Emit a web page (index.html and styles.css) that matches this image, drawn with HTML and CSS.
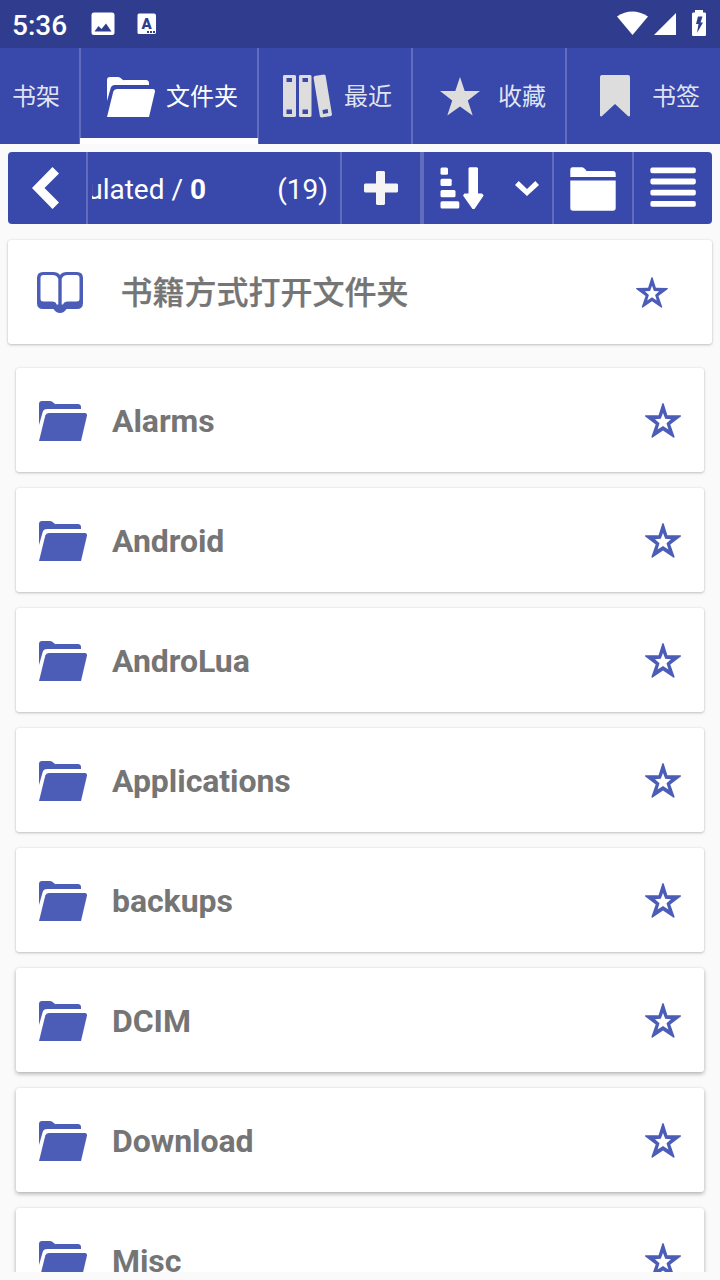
FILE: index.html
```
<!DOCTYPE html>
<html lang="zh">
<head>
<meta charset="utf-8">
<title>文件夹</title>
<link rel="stylesheet" href="styles.css">
</head>
<body>

<svg class="defs">
	<symbol id="folder-open" viewBox="0 0 48 40">
		<path d="M0 24V3Q0 0 3 0H11Q13 0 14.5 1.8T17.5 3H39Q42 3.3 42 6V8H8Q4.5 8 3.7 11Z"/>
		<path d="M10 12H46Q48.3 12.3 48 14.5L42 40H0L6.3 14.5Q7 12 10 12Z"/>
	</symbol>
	<symbol id="star-outline" viewBox="0 0 36 35">
		<path fill-rule="evenodd" d="M17.3 .5Q18 -.5 18.700 .5L22.400 12.200L35.500 12.300Q36.500 12.800 35.500 13.800L25.300 21.500L29.600 33.800Q29.500 35 28.300 34.500L18 27.500L7.700 34.500Q6.500 35 6.400 33.800L10.700 21.500L.5 13.800Q-.5 12.800 .5 12.300L13.600 12.200ZM18 10L15.800 15.800L10 16.200L14.500 20.200L12.600 26.500L18 23L23.400 26.500L21.500 20.200L26 16.200L20.200 15.800Z"/>
	</symbol>
</svg>

<header class="status">
	<span class="time">5:36</span>
	<svg class="picture" width="24" height="24"><path fill-rule="evenodd" d="M3 .5H21Q23.5 .5 23.5 3V20.500Q23.5 23 21 23H3Q.5 23 .5 20.500V3Q.5 .5 3 .5ZM3.5 19.500H20.5L15 11.500L10.5 17L7.500 14Z"/></svg>
	<svg class="keyboard" width="20" height="22"><path d="M2 .5H17Q19 .5 19 2.500V19.500Q19 21 17 21H2Q.5 21 .5 19.500V2.500Q.5 .5 2 .5Z"/><text x="9.700" y="15.800">A</text><path class="dots" d="M10 19H18"/></svg>
	<svg class="radio" width="96" height="28">
		<path d="M1 6.500Q16 -3.500 32 6.500L16.500 25Z"/>
		<path d="M38 25L60 3V25Z"/>
		<path fill-rule="evenodd" d="M79 0H87V2.500H89Q90 2.500 90 4V24.500Q90 26 89 26H77Q76 26 76 24.500V4Q76 2.500 77 2.500H79ZM82 6.500L80 14H82.500L81 23L87 12.500H84.500L86.500 6.500Z"/>
	</svg>
</header>

<nav class="tabs">
	<a class="tab"><span>书架</span></a>
	<a class="tab active">
		<svg width="56" height="56"><use href="#folder-open" x="7" y="9" width="48" height="40"/></svg>
		<span>文件夹</span>
	</a>
	<a class="tab">
		<svg width="56" height="56">
			<path fill-rule="evenodd" d="M6 7H17L18 8V48L17 49H6L5 48V8ZM8.500 10V14H14V10ZM8.500 41.500V46H14V41.500Z"/>
			<path fill-rule="evenodd" d="M22 7H32.500L33.500 8V48L32.500 49H22L21 48V8ZM24.500 10V14H30V10ZM24.500 41.500V46H30V41.500Z"/>
			<path fill-rule="evenodd" d="M36.500 8L46 6.500L47.500 7.300L54 46.500L53.200 48L43.500 49.500L42 48.700L35.500 9.500ZM44.500 42L45 46L50.200 45L49.700 41Z"/>
		</svg>
		<span>最近</span>
	</a>
	<a class="tab">
		<svg width="56" height="56"><path d="M28 9L32.700 23H48L35.800 32.500L40.700 47.500L28 38.500L15.300 47.500L20.200 32.500L8 23H23.300Z"/></svg>
		<span>收藏</span>
	</a>
	<a class="tab">
		<svg width="56" height="56"><path d="M16 7H42Q44 7 44 9V48L42.500 48.500L29 36L15.500 48.500L14 48V9Q14 7 16 7Z"/></svg>
		<span>书签</span>
	</a>
</nav>

<div class="toolbar">
	<a class="tool back"><svg width="28" height="42"><path d="M20.500 0L27 6.500L12.500 21L27 35.500L20.500 42L0 21Z"/></svg></a>
	<div class="path">
		<div class="crumbs"><span>emulated / <b>0</b></span></div>
		<span class="count">(19)</span>
	</div>
	<a class="tool plus"><svg width="34" height="34"><path d="M13 0H20L21 1V12.500H33L34 13.500V20.500L33 21.500H21V33L20 34H13L12 33V21.500H1L0 20.500V13.500L1 12.500H12V1Z"/></svg></a>
	<a class="tool sort">
		<svg width="44" height="43">
			<rect x=".5" y=".5" width="7.500" height="7.200" rx="1.500"/>
			<rect x=".5" y="11.800" width="11.200" height="7.200" rx="1.500"/>
			<rect x=".5" y="23" width="15" height="7.200" rx="1.500"/>
			<rect x=".5" y="34.200" width="18.800" height="7.200" rx="1.500"/>
			<path d="M29.500 .3H37L38 1.300V26.500L42 26.500L43.700 28.500L34.500 42H32.500L23 28.500L24.500 26.500L28.500 26.500V1.300Z"/>
		</svg>
		<svg width="24" height="15"><path d="M0 4L3.700 0L12 8L20.300 0L24 4L12 15Z"/></svg>
	</a>
	<a class="tool">
		<svg width="46" height="44">
			<path d="M.3 10V3Q.3 .3 2.500 .3H12Q14 .3 16.500 4H43Q45.700 4 45.700 7V10Z"/>
			<path d="M.3 13.500H45.700V41Q45.700 43.700 43 43.700H3Q.3 43.700 .3 41Z"/>
		</svg>
	</a>
	<a class="tool menu">
		<svg width="46" height="42">
			<rect x=".4" y=".4" width="45.400" height="5.800" rx="1.800"/>
			<rect x=".4" y="11.600" width="45.400" height="5.800" rx="1.800"/>
			<rect x=".4" y="22.800" width="45.400" height="5.800" rx="1.800"/>
			<rect x=".4" y="34" width="45.400" height="5.800" rx="1.800"/>
		</svg>
	</a>
</div>

<div class="card book">
	<svg class="icon" width="46" height="41"><path fill-rule="evenodd" d="M6 0H16Q21 0 23 3Q25 0 30 0H40Q46 0 46 6V31Q46 37 40 37H29.500Q27 41 23 41Q19 41 16.500 37H6Q0 37 0 31V6Q0 0 6 0ZM6.500 3Q3.500 3 3.500 6V27Q3.500 29.500 6.500 29.500H15Q19 29.500 19.500 32.500H21.300V7Q20 3 15.500 3ZM30.500 3Q26 3 24.700 7V32.500H26Q27 29.500 31 29.500H39.500Q42.500 29.500 42.500 27V6Q42.500 3 39.500 3Z"/></svg>
	<span class="name">书籍方式打开文件夹</span>
	<svg class="star"><use href="#star-outline"/></svg>
</div>

<div class="list">
	<div class="card">
		<svg class="icon"><use href="#folder-open"/></svg>
		<span class="name">Alarms</span>
		<svg class="star"><use href="#star-outline"/></svg>
	</div>
	<div class="card">
		<svg class="icon"><use href="#folder-open"/></svg>
		<span class="name">Android</span>
		<svg class="star"><use href="#star-outline"/></svg>
	</div>
	<div class="card">
		<svg class="icon"><use href="#folder-open"/></svg>
		<span class="name">AndroLua</span>
		<svg class="star"><use href="#star-outline"/></svg>
	</div>
	<div class="card">
		<svg class="icon"><use href="#folder-open"/></svg>
		<span class="name">Applications</span>
		<svg class="star"><use href="#star-outline"/></svg>
	</div>
	<div class="card">
		<svg class="icon"><use href="#folder-open"/></svg>
		<span class="name">backups</span>
		<svg class="star"><use href="#star-outline"/></svg>
	</div>
	<div class="card low">
		<svg class="icon"><use href="#folder-open"/></svg>
		<span class="name">DCIM</span>
		<svg class="star"><use href="#star-outline"/></svg>
	</div>
	<div class="card low">
		<svg class="icon"><use href="#folder-open"/></svg>
		<span class="name">Download</span>
		<svg class="star"><use href="#star-outline"/></svg>
	</div>
	<div class="card low">
		<svg class="icon"><use href="#folder-open"/></svg>
		<span class="name">Misc</span>
		<svg class="star"><use href="#star-outline"/></svg>
	</div>
</div>

</body>
</html>
```
FILE: styles.css
```
* {
	box-sizing: border-box;
}

body {
	display: flex;
	flex-direction: column;
	height: 1280px;
	margin: 0;
	padding-bottom: 8px;
	overflow: hidden;
	background: #fafafa;
	font-family: Roboto, 'Noto Sans CJK SC', sans-serif;
}

svg {
	display: block;
	flex: none;
	fill: currentColor;
}

.defs {
	display: none;
}

.status {
	display: flex;
	flex: none;
	align-items: center;
	height: 48px;
	padding: 0 13px 0 12px;
	color: white;
	background: #303d8f;
}

.time {
	width: 79px;
	padding-top: 3px;
	font-size: 28px;
	font-weight: 500;
}

.keyboard {
	margin-left: 22px;
}

.keyboard text {
	fill: #303d8f;
	font-size: 15px;
	font-weight: 900;
	text-anchor: middle;
}

.keyboard .dots {
	stroke: #303d8f;
	stroke-width: 2;
	stroke-dasharray: 2 1;
}

.radio {
	margin: 0 -5px 0 auto;
}

.tabs {
	display: grid;
	flex: none;
	grid-template-columns: 80px 178px 154px 154px 154px;
	height: 96px;
	color: rgba(255, 255, 255, 0.87);
	background: #3949ab;
}

.tab {
	position: relative;
	display: flex;
	align-items: center;
	justify-content: flex-end;
	gap: 10px;
	padding-right: 19px;
	border-right: 1px solid #606dbc;
	border-left: 1px solid #606dbc;
	font-size: 24px;
	white-space: nowrap;
}

.tab:first-child {
	border-left: none;
}

.tab:last-child {
	border-right: none;
	padding-right: 20px;
}

.tab span {
	padding-bottom: 4px;
}

.tab svg {
	color: #ddd;
}

.tab.active, .tab.active svg {
	color: white;
}

.tab.active::after {
	position: absolute;
	content: "";
	right: -1px;
	bottom: 0;
	left: -1px;
	height: 6px;
	background: white;
}

.toolbar {
	display: grid;
	flex: none;
	grid-template-columns: 78px 254px 80px 132px 80px 80px;
	height: 72px;
	margin: 8px 8px 16px;
	overflow: hidden;
	border-radius: 4px;
	color: white;
	background: #3949ab;
}

.toolbar > * + * {
	border-left: 2px solid #606dbc;
}

.tool {
	display: flex;
	align-items: center;
	justify-content: center;
	padding-top: 1px;
}

.tool.back {
	padding: 0 2px 0 0;
}

.tool.plus {
	padding-top: 0;
	color: #f5f5f5;
}

.toolbar .sort {
	justify-content: flex-start;
	gap: 31px;
	padding-left: 16px;
	border-left-width: 4px;
}

.tool.menu {
	padding-top: 0;
}

.path {
	display: flex;
	align-items: center;
	justify-content: space-between;
	padding: 2px 12px 0 4px;
	font-size: 28px;
}

.crumbs {
	display: flex;
	justify-content: flex-end;
	width: 114px;
	overflow: hidden;
	white-space: nowrap;
}

.card {
	display: flex;
	align-items: center;
	height: 104px;
	padding: 0 23px;
	border-radius: 3px;
	color: #4c5db7;
	background: white;
	box-shadow: 0 1px 3px rgba(0, 0, 0, 0.22), 0 0 2px rgba(0, 0, 0, 0.1);
}

.card.low {
	box-shadow: 0 2px 4px rgba(0, 0, 0, 0.28), 0 0 2px rgba(0, 0, 0, 0.08);
}

.icon {
	width: 48px;
	height: 40px;
	margin-top: 2px;
}

.name {
	flex: 1;
	margin-left: 25px;
	padding-top: 1px;
	color: #757575;
	font-size: 32px;
	font-weight: bold;
	letter-spacing: -0.06px;
}

.star {
	width: 36px;
	height: 35px;
	margin-top: 1px;
}

.book {
	flex: none;
	margin: 0 8px;
	padding: 0 44px 0 29px;
}

.book .icon {
	width: 46px;
	height: 41px;
	margin-top: 1px;
}

.book .name {
	margin-left: 37.5px;
	padding: 0 0 4px;
	font-weight: 500;
	letter-spacing: 0;
	-webkit-text-stroke: 0.25px #757575;
}

.book .star {
	width: 32px;
	height: 31px;
}

.list {
	flex: 1;
	min-height: 0;
	padding: 24px 16px 0;
	overflow: hidden;
}

.list .card {
	margin-bottom: 16px;
}
```
